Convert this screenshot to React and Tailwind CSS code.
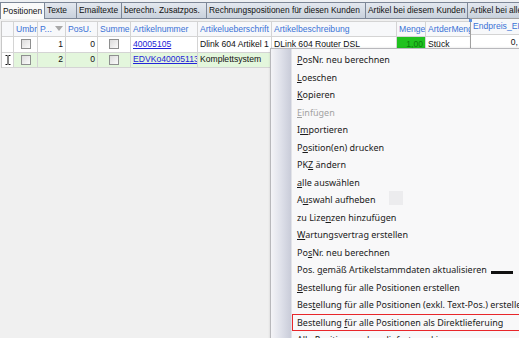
import { useState } from 'react';

const tabs = [
  { label: 'Positionen', w: 45 },
  { label: 'Texte', w: 33 },
  { label: 'Emailtexte', w: 46 },
  { label: 'berechn. Zusatzpos.', w: 86 },
  { label: 'Rechnungspositionen für diesen Kunden', w: 160 },
  { label: 'Artikel bei diesem Kunden', w: 103 },
  { label: 'Artikel bei allen Kunden', w: 100 },
];

const cols = [
  { key: 'gutter', label: '', w: 12 },
  { key: 'umbr', label: 'Umbr', w: 24 },
  { key: 'p', label: 'P...', w: 28 },
  { key: 'posu', label: 'PosU.', w: 32 },
  { key: 'summe', label: 'Summe', w: 33 },
  { key: 'nr', label: 'Artikelnummer', w: 67 },
  { key: 'ueb', label: 'Artikelueberschrift', w: 74 },
  { key: 'besch', label: 'Artikelbeschreibung', w: 125 },
  { key: 'menge', label: 'Menge', w: 29 },
  { key: 'art', label: 'ArtderMenge', w: 47 },
];

const rows = [
  { p: 1, posu: 0, nr: '40005105', ueb: 'Dlink 604 Artikel 1', besch: 'DLink 604 Router DSL', menge: '1,00', art: 'Stück' },
  { p: 2, posu: 0, nr: 'EDVKo40005113', ueb: 'Komplettsystem', besch: '', menge: '', art: '', current: true },
];

// [before, underlined letter, after]
const menu = [
  ['', 'P', 'osNr. neu berechnen'],
  ['', 'L', 'oeschen'],
  ['', 'K', 'opieren'],
  ['', 'E', 'infügen', true],
  ['I', 'm', 'portieren'],
  ['P', 'o', 'sition(en) drucken'],
  ['PK', 'Z', ' ändern'],
  ['', 'a', 'lle auswählen'],
  ['A', 'u', 'swahl aufheben'],
  ['zu Lize', 'n', 'zen hinzufügen'],
  ['', 'W', 'artungsvertrag erstellen'],
  ['Po', 's', 'Nr. neu berechnen'],
  ['Pos. ', 'g', 'emäß Artikelstammdaten aktualisieren'],
  ['', 'B', 'estellung für alle Positionen erstellen'],
  ['Bes', 't', 'ellung für alle Positionen (exkl. Text-Pos.) erstellen'],
  ['Bestellung ', 'f', 'ür alle Positionen als Direktlieferuing', false, true],
  ['', 'A', 'lle Positionen als geliefert markieren'],
];

const Check = () => (
  <span className="block w-[10px] h-[10px] border border-[#8e8f8f] bg-gradient-to-br from-[#dcdcdc] to-[#fbfbfb]" />
);

const IBeam = () => (
  <svg width="6" height="10" viewBox="0 0 6 10">
    <path d="M0.5 0.5h2M3.5 0.5h2M0.5 9.5h2M3.5 9.5h2M3 1v8" stroke="#111" strokeWidth="1" fill="none" />
  </svg>
);

const Cell = ({ w, className = '', children }) => (
  <div
    className={`shrink-0 h-full border-r border-[#d4d4d4] flex items-center px-[2px] overflow-hidden whitespace-nowrap ${className}`}
    style={{ width: w }}
  >
    {children}
  </div>
);

const App = () => {
  const [tab] = useState('Positionen');

  return (
    <div
      className="relative w-[519px] h-[338px] overflow-hidden bg-[#f0f0f0] text-[8.6px] text-[#111]"
      style={{ fontFamily: '"Liberation Sans", Arial, sans-serif' }}
    >
      {/* tabs */}
      <div className="h-[19px] flex items-end bg-[#eef0f3] border-b border-[#7d8797]">
        {tabs.map((t) => (
          <div
            key={t.label}
            className={`shrink-0 h-[16px] pl-[2px] flex items-center whitespace-nowrap overflow-hidden border border-b-0 border-[#7d8797] -mr-px text-[8.4px] ${
              t.label === tab
                ? 'bg-[#fafafa] h-[17px] -mb-px'
                : 'bg-gradient-to-b from-[#e3e8ef] to-[#c9d1dc]'
            }`}
            style={{ width: t.w }}
          >
            {t.label}
          </div>
        ))}
      </div>

      {/* grid */}
      <div className="mt-[2px] ml-[1px] bg-white border-l border-[#c8c8c8]">
        <div className="h-[16px] flex bg-[#f7f8fa] border-t border-b border-[#d4d4d4] text-[#3a72d6]">
          {cols.map((c) => (
            <Cell key={c.key} w={c.w}>
              {c.key === 'p' ? (
                <span className="flex items-center gap-[3px]">
                  P...
                  <svg width="8" height="5" viewBox="0 0 8 5">
                    <path d="M0 0h8L4 5z" fill="#a8a8a8" />
                  </svg>
                </span>
              ) : (
                c.label
              )}
            </Cell>
          ))}
        </div>
        {rows.map((r) => (
          <div
            key={r.p}
            className={`h-[15.5px] flex border-b border-[#d4d4d4] ${r.current ? 'bg-[#e3f6dc]' : 'bg-white'}`}
          >
            <Cell w={12} className="justify-center bg-white">
              {r.current && <IBeam />}
            </Cell>
            <Cell w={24} className="justify-center">
              <Check />
            </Cell>
            <Cell w={28} className="justify-end">
              {r.p}
            </Cell>
            <Cell w={32} className="justify-end">
              {r.posu}
            </Cell>
            <Cell w={33} className="justify-center">
              <Check />
            </Cell>
            <Cell w={67}>
              <span className="text-[#2323d8] underline">{r.nr}</span>
            </Cell>
            <Cell w={74}>{r.ueb}</Cell>
            <Cell w={125}>{r.besch}</Cell>
            <Cell w={29} className={r.menge ? 'justify-end bg-[#1fc21f] text-[#0d7a0d]' : ''}>
              {r.menge}
            </Cell>
            <Cell w={47}>{r.art}</Cell>
          </div>
        ))}
      </div>

      {/* dragged column header */}
      <div className="absolute left-[470px] top-[18px] w-[60px] h-[34px] bg-white border border-[#a0a0a0] shadow-[1px_1px_2px_rgba(0,0,0,0.2)]">
        <div className="h-[16px] flex items-center px-[2px] text-[#3a72d6] bg-[#f7f8fa] border-b border-[#d4d4d4] whitespace-nowrap">
          Endpreis_EK
        </div>
        <div className="h-[15px] flex items-center justify-end pr-[11px]">0,</div>
      </div>
      <span className="absolute left-[469px] top-[19px] w-[3px] h-[3px] bg-[#5b8fe0]" />

      {/* context menu */}
      <div
        className="absolute left-[270px] top-[48px] w-[290px] h-[300px] bg-[#f8f8f9] border border-[#b8b8bc] shadow-[1px_1px_3px_rgba(0,0,0,0.25)] flex text-[9px] text-[#1b1b1b]"
        style={{ fontFamily: '"Noto Sans", "Liberation Sans", sans-serif' }}
      >
        <div className="w-[21px] shrink-0 bg-gradient-to-r from-[#f4f4f7] via-[#dfe1ea] to-[#c9ccd9] border-r border-[#e2e3e8]" />
        <div className="flex-1 pt-[2px] pl-[1px]">
          {menu.map(([a, u, b, disabled, marked], i) => (
            <div
              key={i}
              className={`relative h-[17.5px] flex items-center pl-[4px] ${
                disabled ? 'text-[#a3a3a3]' : ''
              } ${marked ? 'border border-[#e8262a] -ml-px' : ''}`}
            >
              <span className="whitespace-pre">
                {a}
                <span className="underline underline-offset-1">{u}</span>
                {b}
              </span>
              {i === 8 && <span className="absolute left-[96px] top-0 w-[14px] h-[14px] bg-[#ececee]" />}
              {i === 12 && <span className="absolute left-[198px] top-[10px] w-[22px] h-[3px] bg-[#111]" />}
            </div>
          ))}
        </div>
      </div>
    </div>
  );
};

export default App;
